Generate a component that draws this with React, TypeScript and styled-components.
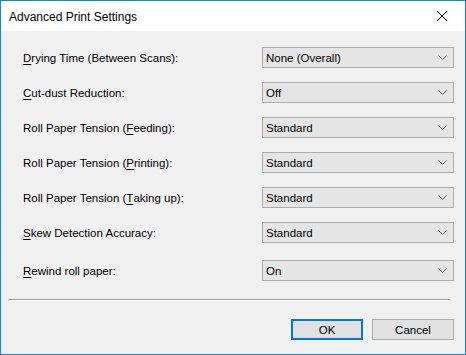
import React from "react";
import styled, { createGlobalStyle } from "styled-components";

const GlobalStyle = createGlobalStyle`
  html, body {
    margin: 0;
    padding: 0;
    background: #ffffff;
  }
  body {
    font-family: "Segoe UI", "Liberation Sans", Arial, sans-serif;
    font-size: 11.5px;
    color: #000000;
  }
`;

const Window = styled.div`
  width: 466px;
  height: 355px;
  box-sizing: border-box;
  border: 1px solid #1883d7;
  background-color: #f0f0f0;
  display: flex;
  flex-direction: column;
`;

const TitleBar = styled.div`
  height: 30px;
  background-color: #ffffff;
  display: flex;
  align-items: center;
  justify-content: space-between;
  padding: 0 8px 0 8px;
`;

const Title = styled.span`
  font-size: 12px;
  padding-top: 1px;
`;

const CloseButton = styled.div`
  width: 30px;
  height: 30px;
  display: flex;
  align-items: center;
  justify-content: center;
`;

const Body = styled.div`
  flex: 1;
  display: flex;
  flex-direction: column;
  padding: 16px 11px 0 8px;
`;

const Form = styled.div`
  display: grid;
  grid-template-columns: 239px 192px;
  row-gap: 14px;
  padding-left: 14px;
`;

const Label = styled.label<{ $shift?: boolean }>`
  font-size: 11.5px;
  display: flex;
  align-items: center;
  height: 21px;
  padding-top: 1px;
  box-sizing: border-box;
  margin-top: ${(p) => (p.$shift ? "3px" : "0")};
`;

const Key = styled.span`
  text-decoration: underline;
  text-underline-offset: 2px;
`;

const Combo = styled.div<{ $shift?: boolean }>`
  height: 21px;
  box-sizing: border-box;
  border: 1px solid #acacac;
  background-color: #e5e5e5;
  display: flex;
  align-items: center;
  justify-content: space-between;
  padding: 0 6px 0 3px;
  font-size: 11.5px;
  margin-top: ${(p) => (p.$shift ? "3px" : "0")};
`;

const Separator = styled.div`
  margin-top: 18px;
  height: 1px;
  background-color: #a0a0a0;
  border-bottom: 1px solid #ffffff;
  width: 441px;
`;

const Buttons = styled.div`
  display: flex;
  justify-content: flex-end;
  gap: 9px;
  margin-top: 18px;
`;

const Button = styled.button<{ $default?: boolean; $width: number }>`
  width: ${(p) => p.$width}px;
  height: 21px;
  box-sizing: border-box;
  background-color: #e1e1e1;
  border: ${(p) => (p.$default ? "2px solid #0078d7" : "1px solid #adadad")};
  font-family: "Segoe UI", "Liberation Sans", Arial, sans-serif;
  font-size: 11.5px;
  color: #000000;
  padding: 0;
`;

const Chevron = () => (
  <svg width="9" height="5" viewBox="0 0 9 5">
    <path d="M0.5 0.5 L4.5 4.5 L8.5 0.5" fill="none" stroke="#606060" strokeWidth="1" />
  </svg>
);

const CloseIcon = () => (
  <svg width="10" height="10" viewBox="0 0 10 10">
    <path d="M0 0 L10 10 M10 0 L0 10" stroke="#000000" strokeWidth="1" />
  </svg>
);

const rows: { pre: string; key: string; post: string; value: string }[] = [
  { pre: "", key: "D", post: "rying Time (Between Scans):", value: "None (Overall)" },
  { pre: "", key: "C", post: "ut-dust Reduction:", value: "Off" },
  { pre: "Roll Paper Tension (", key: "F", post: "eeding):", value: "Standard" },
  { pre: "Roll Paper Tension (", key: "P", post: "rinting):", value: "Standard" },
  { pre: "Roll Paper Tension (", key: "T", post: "aking up):", value: "Standard" },
  { pre: "", key: "S", post: "kew Detection Accuracy:", value: "Standard" },
  { pre: "", key: "R", post: "ewind roll paper:", value: "On" },
];

export default function App() {
  return (
    <>
      <GlobalStyle />
      <Window>
        <TitleBar>
          <Title>Advanced Print Settings</Title>
          <CloseButton>
            <CloseIcon />
          </CloseButton>
        </TitleBar>
        <Body>
          <Form>
            {rows.map((r, i) => {
              const last = i === rows.length - 1;
              return (
                <React.Fragment key={r.post}>
                  <Label $shift={last}>
                    {r.pre}
                    <Key>{r.key}</Key>
                    {r.post}
                  </Label>
                  <Combo $shift={last}>
                    <span>{r.value}</span>
                    <Chevron />
                  </Combo>
                </React.Fragment>
              );
            })}
          </Form>
          <Separator />
          <Buttons>
            <Button $default $width={72}>OK</Button>
            <Button $width={82}>Cancel</Button>
          </Buttons>
        </Body>
      </Window>
    </>
  );
}
